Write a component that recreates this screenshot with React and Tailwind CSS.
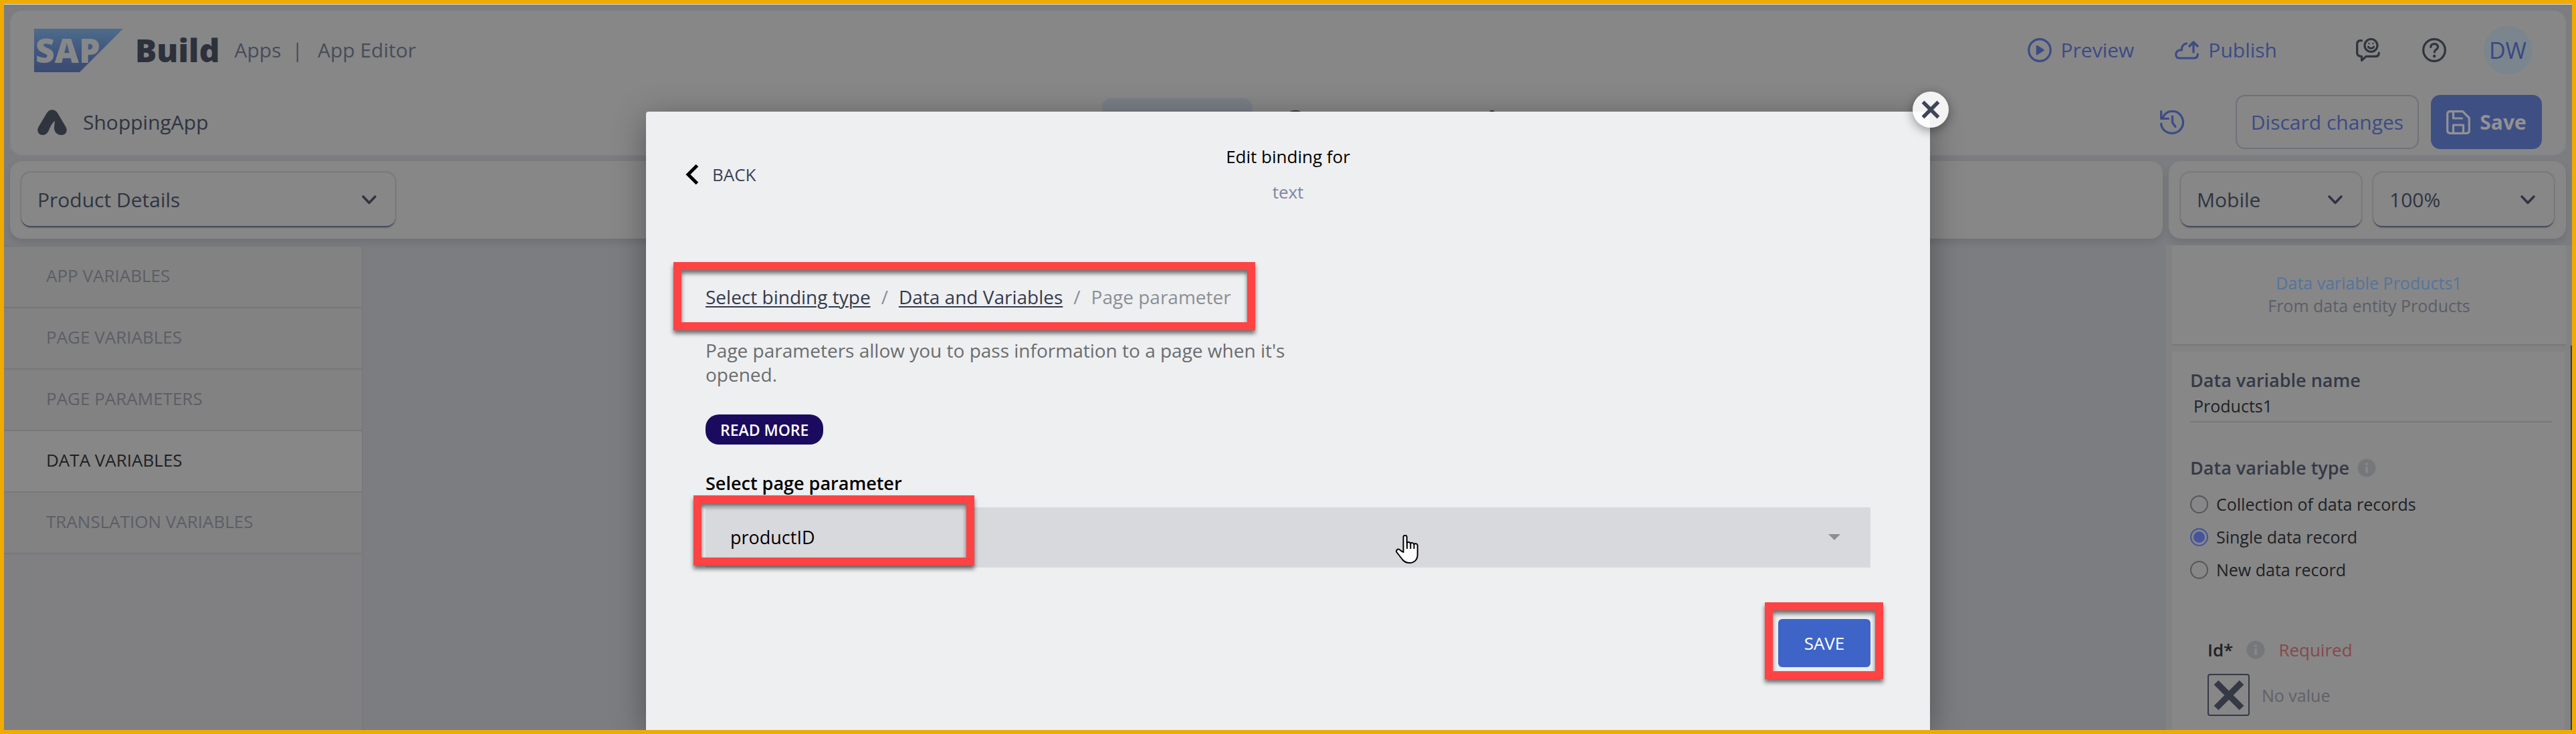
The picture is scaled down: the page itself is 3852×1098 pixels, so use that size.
import React from "react";

function Chevron({ className }) {
  return (
    <svg viewBox="0 0 24 16" className={className} fill="none" stroke="currentColor" strokeWidth="3.5" strokeLinecap="round" strokeLinejoin="round" aria-hidden="true">
      <path d="M3 3 L12 12.5 L21 3" />
    </svg>
  );
}

function Icon({ children, className = "" }) {
  return (
    <svg viewBox="0 0 36 36" className={`size-9 shrink-0 ${className}`} fill="none" stroke="currentColor" strokeWidth="3.2" strokeLinecap="round" strokeLinejoin="round" aria-hidden="true">
      {children}
    </svg>
  );
}

function SapLogo() {
  return (
    <svg viewBox="0 0 133 65" className="h-[65px] w-[133px] shrink-0" role="img" aria-label="SAP">
      <defs>
        <linearGradient id="sap" x1="0" y1="0" x2="0" y2="1">
          <stop offset="0" stopColor="#4d6c8b" />
          <stop offset="0.55" stopColor="#40557f" />
          <stop offset="1" stopColor="#3b4a70" />
        </linearGradient>
      </defs>
      <path d="M0 0 H133 L68 65 H0 Z" fill="url(#sap)" />
      <text x="2" y="51" fill="#878788" fontFamily="Open Sans, sans-serif" fontWeight="800" fontSize="50">SAP</text>
    </svg>
  );
}

function ToolbarSelect({ label, value, className }) {
  return (
    <div className={`relative ${className}`}>
      <select
        aria-label={label}
        defaultValue={value}
        className="h-[82px] w-full appearance-none rounded-[14px] border-b-2 border-[#454c5c] bg-[#878788] pr-16 pl-6 text-[30px] text-[#2f343f] shadow-[0_0_3px_rgba(0,0,0,0.4)] outline-none"
      >
        <option>{value}</option>
      </select>
      <Chevron className="pointer-events-none absolute top-[33px] right-[27px] h-4 w-6 text-[#2f343f]" />
    </div>
  );
}

function Info() {
  return (
    <svg viewBox="0 0 28 28" className="size-7 shrink-0" aria-hidden="true">
      <circle cx="14" cy="14" r="13.5" fill="#75777a" />
      <rect x="12" y="6.5" width="4" height="3.5" fill="#858687" />
      <rect x="12" y="12" width="4" height="9.5" fill="#858687" />
    </svg>
  );
}

function Highlight({ className }) {
  return (
    <span
      aria-hidden="true"
      className={`pointer-events-none absolute border-[12px] border-[#fe4344] drop-shadow-[0_5px_3px_rgba(0,0,0,0.55)] ${className}`}
    />
  );
}

function Header() {
  return (
    <header className="flex flex-col gap-[31px] rounded-[18px] bg-[#878788] px-9 pt-[23px] pb-[9px]">
      <div className="flex h-[72px] items-center justify-between pr-[15px]">
        <div className="flex items-center text-[30px] leading-10 text-[#474c59]">
          <SapLogo />
          <span className="ml-[18px] text-[48px] font-extrabold text-[#2c313b]">Build</span>
          <span className="ml-[22px]">Apps</span>
          <span className="ml-4">|</span>
          <span className="ml-[22px]">App Editor</span>
        </div>
        <div className="flex items-center text-[30px] leading-10 text-[#3b4b85]">
          <button type="button" className="flex items-center gap-[14px]">
            <Icon>
              <circle cx="18" cy="18" r="16.3" />
              <path d="M14 12 L23.5 18 L14 24 Z" fill="currentColor" strokeWidth="2.5" />
            </Icon>
            Preview
          </button>
          <button type="button" className="ml-[61px] flex items-center gap-[14px]">
            <Icon>
              <path d="M17.5 8 C12.500 9 10 13 10.500 18 C5 17.500 1.700 20.500 1.700 24.500 C1.700 28 4 30 7 30 H29 C32.500 30 34.300 28 34.300 24" />
              <path d="M28 21 V6.500 M22 12 L28 6 L34 12" />
            </Icon>
            Publish
          </button>
          <button type="button" aria-label="Feedback" className="ml-[118px] text-[#2f343d]">
            <Icon>
              <path d="M8.500 3.700 H7 C3.500 3.700 1.700 5.500 1.700 9 V22 C1.700 25.500 3.500 27.400 8.500 27.400 V33.500 L15 27.400 H29 C32.500 27.400 34.300 25.500 34.300 22" />
              <circle cx="22.5" cy="11" r="9.500" />
              <path d="M18.300 13 C19.500 16 25.500 16 26.700 13" strokeWidth="2.800" />
              <path d="M19.500 8 V8.100 M25.500 8 V8.100" strokeWidth="2.400" />
            </Icon>
          </button>
          <button type="button" aria-label="Help" className="ml-[63px] text-[#2f343d]">
            <Icon>
              <circle cx="18" cy="18" r="16.3" />
              <path d="M12.800 13.500 C12.800 7 23.500 7 23.500 13.200 C23.500 17 18.500 17 18.300 21" />
              <circle cx="18.200" cy="27" r="2.200" fill="currentColor" stroke="none" />
            </Icon>
          </button>
          <button type="button" className="ml-14 flex size-[72px] items-center justify-center rounded-full bg-[#7a858d] text-[34px] text-[#3a4684]">
            DW
          </button>
        </div>
      </div>
      <div className="grid grid-cols-[1fr_556px_1fr] items-center">
        <div className="flex items-center gap-6 pl-[5px] text-[30px] leading-10 text-[#2f343f]">
          <svg viewBox="0 0 44 38" className="h-[38px] w-11" fill="#2f343f" aria-hidden="true">
            <path d="M8 38 C1 38 -1.500 31 1.500 26 L14 5 C17.500 -1.500 26.500 -1.500 30 5 L42.500 26 C45.500 31 43 38 36 38 C28 38 25 32 25 27 C25 23 26 20 26 17 C22 20 20 24 17 31 C15 35 12.500 38 8 38 Z" />
          </svg>
          ShoppingApp
        </div>
        <div className="flex h-[71px] items-center">
          <div className="h-[71px] w-[225px] shrink-0 rounded-[14px] bg-[#7a7f87]" />
          <Icon className="ml-[46px] text-[#2f343d]">
            <circle cx="18" cy="18" r="16.3" />
          </Icon>
          <Icon className="ml-[258px] text-[#2f343d]">
            <circle cx="18" cy="5" r="3.5" fill="currentColor" />
          </Icon>
        </div>
        <div className="flex items-center justify-end text-[30px] leading-10 text-[#3b4b85]">
          <button type="button" aria-label="History" className="mr-[77px]">
            <Icon>
              <path d="M1.700 1.700 V12.500 H12.500" />
              <path d="M4 11 C9.500 -1 24 -1 30.500 7 C40 20 31 34.300 18 34.300 C9 34.300 2 28 1.700 20" />
              <path d="M18.500 9 V18.500 L23 24.500" />
            </Icon>
          </button>
          <button type="button" className="h-[81px] w-[274px] rounded-[14px] border-2 border-[#70717a]">Discard changes</button>
          <button type="button" className="ml-[18px] flex h-[81px] w-[166px] items-center justify-center gap-[14px] rounded-[14px] bg-[#3e4f84] font-bold text-[#929294]">
            <Icon>
              <path d="M6 1.700 H24.500 L34.300 11.500 V30 C34.300 33 33 34.300 30 34.300 H6 C3 34.300 1.700 33 1.700 30 V6 C1.700 3 3 1.700 6 1.700 Z" />
              <path d="M10.500 2 V12 H23.500 M10.500 34 V22 H25.500 V34" />
            </Icon>
            Save
          </button>
        </div>
      </div>
    </header>
  );
}

const sections = ["APP VARIABLES", "PAGE VARIABLES", "PAGE PARAMETERS", "DATA VARIABLES", "TRANSLATION VARIABLES"];

function Sidebar() {
  return (
    <nav className="flex w-[537px] flex-col border-r-2 border-[#79797c] bg-[#808083]">
      {sections.map((name) => (
        <a
          key={name}
          href="#"
          className={`flex h-[92px] items-center border-t-2 border-[#78787b] pb-1 pl-[63px] text-[26px] leading-9 ${
            name === "DATA VARIABLES" ? "bg-[#878788] text-[#1e1f22]" : "bg-[#828283] text-[#5c5e65]"
          }`}
        >
          {name}
        </a>
      ))}
      <div className="border-t-2 border-[#78787b]" />
    </nav>
  );
}

const recordTypes = ["Collection of data records", "Single data record", "New data record"];

function Inspector() {
  return (
    <aside className="relative flex w-[607px] flex-col gap-[9px] bg-[#828283] px-[9px]">
      <div className="border-b-2 border-[#78787b] bg-[#878788] pt-[39px] pb-[41px] text-center text-[25px] leading-[34px]">
        <p className="text-[#55749c]">Data variable Products1</p>
        <p className="text-[#5c5e65]">From data entity Products</p>
      </div>
      <div className="mr-0.5 flex-1 bg-[#878788] pt-[25px] pr-[18px] pl-[27px] text-[25px] leading-[34px] text-[#202124]">
        <label htmlFor="variable-name" className="block text-[27px] leading-9 font-semibold text-[#353946]">
          Data variable name
        </label>
        <input id="variable-name" defaultValue="Products1" className="mt-[3px] block h-[42px] w-full border-b-2 border-[#76777a] pb-[6px] pl-[5px] outline-none" />
        <div className="mt-[50px] flex items-center gap-3 text-[27px] leading-9 font-semibold text-[#353946]">
          <h3 id="variable-type">Data variable type</h3>
          <Info />
        </div>
        <div role="radiogroup" aria-labelledby="variable-type" className="mt-[19px] flex flex-col gap-[15px]">
          {recordTypes.map((type) => (
            <label key={type} className="flex items-center gap-3">
              <input
                type="radio"
                name="record-type"
                defaultChecked={type === "Single data record"}
                className="size-[27px] appearance-none rounded-full border-2 border-[#55565a] checked:border-[#43559b] checked:bg-[#43559b] checked:shadow-[inset_0_0_0_3px_#878788]"
              />
              {type}
            </label>
          ))}
        </div>
        <div className="mt-[85px] flex items-center pl-[26px] text-[26px] leading-9">
          <span className="mr-5 font-semibold">Id*</span>
          <Info />
          <span className="ml-5 text-[#87474a]">Required</span>
        </div>
        <div className="mt-[18px] flex items-center gap-[18px] pl-[26px] text-[#606167]">
          <button type="button" aria-label="Choose binding" className="flex size-[63px] items-center justify-center rounded-[4px] border-2 border-[#353946]">
            <svg viewBox="0 0 46 46" className="size-[46px]" stroke="#353946" strokeWidth="9.500" aria-hidden="true">
              <path d="M4 4 L42 42 M42 4 L4 42" />
            </svg>
          </button>
          No value
        </div>
      </div>
      <div className="absolute top-[150px] right-0 bottom-0 w-0.5 bg-[#333642]" />
    </aside>
  );
}

function HandCursor() {
  return (
    <svg viewBox="0 0 34 43" className="pointer-events-none absolute top-[41px] left-[1032px] h-[43px] w-[34px]" fill="#fff" stroke="#000" strokeWidth="2" strokeLinejoin="round" aria-hidden="true">
      <path d="M11.500 26 V3.500 C11.500 0.300 16.700 0.300 16.700 3.500 V12 C18.500 10.300 21.500 10.800 22 13 C24 11.300 27 12 27.300 14 C29.500 12.300 32.700 13.500 32.700 16 V30 C32.700 37 28 42 21 42 C16 42 13 40.500 10.500 37.500 L1.500 26 C0 23.500 3 20.500 5.500 22 C7.500 23.300 9 25.500 11.500 26 Z" />
      <path d="M17 11 V21 M22.300 12.500 V21 M27.500 13.500 V21" fill="none" />
    </svg>
  );
}

function BindingDialog() {
  return (
    <section
      role="dialog"
      aria-label="Edit binding"
      className="absolute top-[161px] bottom-0 left-1/4 w-1/2 rounded-t-[4px] bg-[#eeeff1] text-[28px] leading-9 shadow-[0_10px_50px_rgba(0,0,0,0.35)]"
    >
      <button
        type="button"
        aria-label="Close"
        className="absolute -top-[30px] -right-7 flex size-[54px] items-center justify-center rounded-full bg-white/90 shadow-[0_4px_16px_rgba(0,0,0,0.4)]"
      >
        <svg viewBox="0 0 28 28" className="size-7" stroke="#3f4457" strokeWidth="5.500" aria-hidden="true">
          <path d="M2.500 2.500 L25.500 25.500 M25.500 2.500 L2.500 25.500" />
        </svg>
      </button>
      <div className="grid grid-cols-[1fr_auto_1fr] items-center px-[59px] pt-[49px] text-[26px]">
        <button type="button" className="flex items-center gap-5 justify-self-start text-[#3c4356]">
          <svg viewBox="0 0 20 32" className="h-8 w-5" fill="none" stroke="#000" strokeWidth="5" aria-hidden="true">
            <path d="M17.500 2.500 L4 16 L17.500 29.500" />
          </svg>
          BACK
        </button>
        <div className="flex flex-col items-center gap-[17px]">
          <h2 className="text-black">Edit binding for</h2>
          <p className="text-[#7d869f]">text</p>
        </div>
      </div>
      <div className="flex flex-col items-start px-[89px] pt-[121px]">
        <nav aria-label="Breadcrumb" className="relative flex gap-4 text-[#8c8e95]">
          <a href="#" className="text-[#343a4c] underline decoration-2 underline-offset-[3px]">Select binding type</a>
          <span>/</span>
          <a href="#" className="text-[#343a4c] underline decoration-2 underline-offset-[3px]">Data and Variables</a>
          <span>/</span>
          <span>Page parameter</span>
          <Highlight className="-top-[34px] -right-9 -bottom-8 -left-12" />
        </nav>
        <p className="mt-11 w-1/2 text-[#6b6c6e]">Page parameters allow you to pass information to a page when it's opened.</p>
        <button type="button" className="mt-[42px] h-[45px] rounded-[20px] bg-[#1b0b5e] px-[22px] text-[23px] font-semibold text-white">
          READ MORE
        </button>
        <label htmlFor="page-parameter" className="mt-10 text-[27px] font-semibold text-black">Select page parameter</label>
        <div className="relative mt-[18px] w-full">
          <select id="page-parameter" defaultValue="productID" className="block h-[90px] w-full appearance-none bg-[#d8d9dd] pl-[37px] text-[27px] text-black outline-none">
            <option>productID</option>
          </select>
          <svg viewBox="0 0 18 9" className="pointer-events-none absolute top-10 right-[45px] h-[9px] w-[18px]" fill="#8b8e96" aria-hidden="true">
            <path d="M0 0 H18 L9 9 Z" />
          </svg>
          <Highlight className="-top-[18px] -left-[18px] h-[105px] w-[420px]" />
          <HandCursor />
        </div>
        <div className="relative mt-[77px] self-end">
          <button type="button" className="block h-[72px] w-[138px] rounded-[6px] bg-[#3e64c8] text-[26px] text-white">SAVE</button>
          <Highlight className="-top-[25px] -right-[19px] -bottom-[18px] -left-5" />
        </div>
      </div>
    </section>
  );
}

export default function App() {
  return (
    <div className="relative flex min-h-screen flex-col overflow-hidden border-[6px] border-[#f0ab00] bg-[#7c7d80] font-['Open_Sans',sans-serif]">
      <div className="flex flex-col gap-[9px] border-t border-[#d8d9dc] px-[9px] pt-[9px]">
        <Header />
        <div className="flex gap-[9px]">
          <div className="flex-1 rounded-[18px] bg-[#878788] p-[17px] shadow-[0_6px_12px_rgba(0,0,0,0.1)]">
            <ToolbarSelect label="Page" value="Product Details" className="w-[559px]" />
          </div>
          <div className="flex w-[594px] gap-[18px] rounded-[18px] bg-[#878788] px-[18px] py-[17px] shadow-[0_6px_12px_rgba(0,0,0,0.1)]">
            <ToolbarSelect label="Device" value="Mobile" className="flex-1" />
            <ToolbarSelect label="Zoom" value="100%" className="flex-1" />
          </div>
        </div>
      </div>
      <div className="mt-[10px] flex flex-1 justify-between">
        <Sidebar />
        <Inspector />
      </div>
      <BindingDialog />
    </div>
  );
}
